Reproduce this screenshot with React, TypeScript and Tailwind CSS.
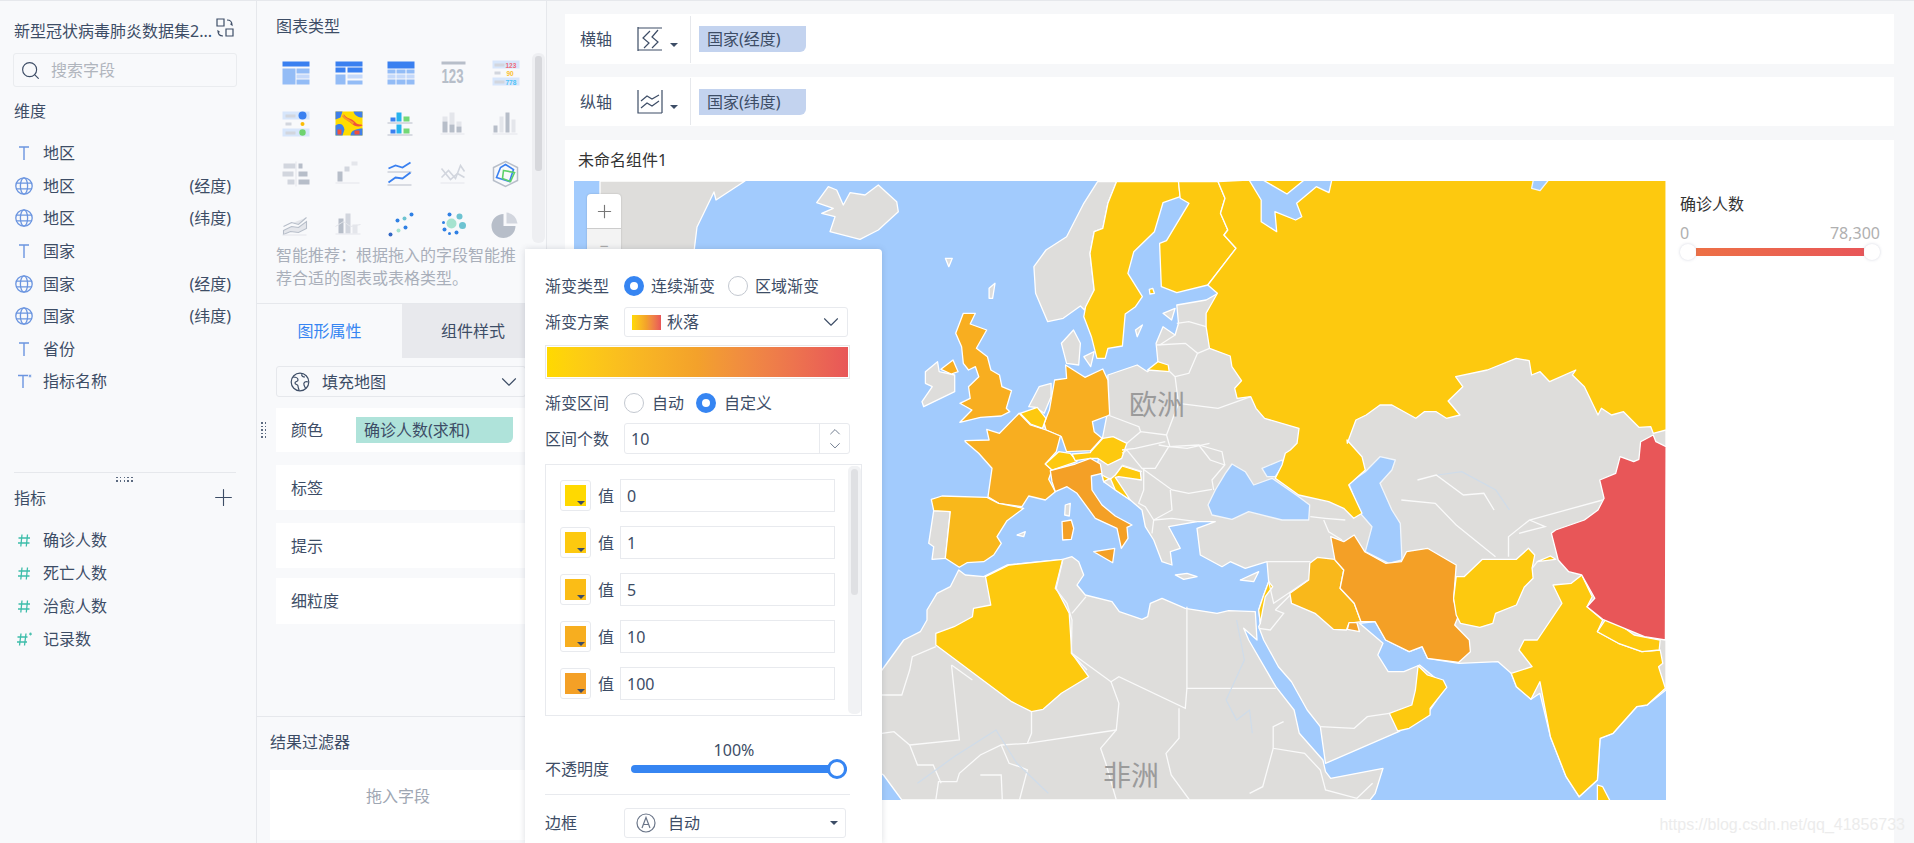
import { ChevronDown, ChevronUp, Plus, Search } from "lucide-react";

const conv = (s: string, ox: number, oy: number, sx: number) =>
  s
    .trim()
    .split(/\s+/)
    .map((p) => {
      const [x, y] = p.split(",").map(Number);
      return `${(ox + x * sx).toFixed(1)},${(oy + y / 3).toFixed(1)}`;
    })
    .join(" ");
// zoomed crop coords -> page coords
const z8 = (s: string) => conv(s, 860, 170, 1 / 2.904);
const z9 = (s: string) => conv(s, 860, 500, 1 / 1.912);
const z10 = (s: string) => conv(s, 1380, 170, 1 / 2.936);
const z11 = (s: string) => conv(s, 882, 440, 1 / 3);

const BLUE = "#a2cbfd";
const GRAY = "#dedddb";
const YEL = "#fdc90f";
const ORG = "#f8ae20";
const ORG2 = "#f4a026";
const SPN = "#f9b81b";
const RED = "#e85658";

const lands: [string, string][] = [
  // gray land
  [GRAY, "600,181 745,181 716,200 714,192 697,227 693,260 620,260 600,200"],
  [GRAY, conv("800,608 835,560 860,570 880,615 900,578 945,585 985,555 1040,605 1045,635 985,690 930,718 840,695 855,650 815,640 850,625", 550, 0, 1 / 3)],
  [
    GRAY,
    z8("720,615 805,585 835,605 865,575 860,520 880,470 915,495 925,460 920,405 1005,390 1040,370 1200,300") +
      " 1666,300 1666,690 " +
      z9("1505,615 1485,620 1440,700 1415,715 1410,840 1375,890 1350,830 1320,710 1300,580 1283,598 1255,560 1245,520 1220,485 1145,490 1085,475 1075,440 1050,455 1005,420 985,365 955,370 1000,430 990,465 1010,515 1040,515 1070,495 1120,560 1090,630 1030,695 890,790 880,680 855,630 825,545 800,500") +
      " " +
      z11("1145,600 1130,560 1135,550 1130,510 1145,465 1160,425 1155,365 1090,385 1045,365 1020,380 955,345 945,265 1000,245 945,245 860,260 895,325 865,335 870,375 840,365 815,300 790,260 780,210 745,180 700,150 665,125 660,105") +
      " " +
      z8("690,880 720,720"),
  ],
  [
    GRAY,
    z11("230,390 250,405 305,410 375,375 542,358 570,350 590,365 605,405 585,435 610,465 690,485 712,515 780,538 797,530 805,490 840,475 910,505 1005,520 1040,512 1120,515 1125,600 1085,565 1100,600") +
      " " +
      z9("795,560 830,630 840,700 885,780 890,815 900,835 1000,805 985,880 975,900 80,900 45,825 0,780 0,520") +
      " " +
      z11("0,690 65,600 115,575 135,540 135,510 165,460 205,440"),
  ],
  [GRAY, z8("690,35 745,35 720,100 705,175 680,185 668,250 680,360 652,420 640,408 590,445 545,455 510,370 505,290 540,240 600,200 650,100")],
  [GRAY, z8("190,605 225,575 230,605 275,615 275,665 185,710 180,695 210,650 190,640")],
  [GRAY, z8("585,520 620,480 640,520 635,585 600,580")],
  [GRAY, z8("650,560 680,545 670,590")],
  [GRAY, z8("490,710 520,650 555,640 555,680 535,730 510,712")],
  [GRAY, z8("527,770 545,765 545,782 530,782")],
  [GRAY, z11("155,212 205,215 190,355 150,358 155,320 140,310")],
  [GRAY, z8("248,265 268,265 258,290")],
  [GRAY, z8("375,355 392,340 385,385 375,385")],
  [GRAY, z8("800,480 820,465 805,500")],
  [GRAY, z8("880,430 915,415 905,450")],
  [GRAY, z11("880,405 915,400 945,410 905,418")],
  [GRAY, z11("1075,420 1130,395 1115,425")],
  [GRAY, z11("550,195 565,190 562,228 548,225")],
  [GRAY, z11("405,285 430,275 425,290")],
  // seas on land
  [BLUE, z11("1050,72 1090,95 1115,135 1170,115 1250,170 1283,195 1280,240 1200,240 1100,215 1050,238 990,225 978,195 1000,150 1030,100")],
  [BLUE, z11("1140,85 1200,60 1205,72 1180,110 1155,110")],
  [BLUE, z10("0,860 45,870 35,900 0,940 35,1020") + " " + z11("1555,250 1560,360 1520,370 1450,335 1470,260 1435,220 1400,130 1450,95")],
  // coloured countries
  [YEL, z8("745,35 925,35 930,80 880,98 855,185 795,245 778,310 820,380 800,410 770,432 762,528 720,535 712,565 688,565 672,500 650,440 655,410 680,360 668,250 680,185 705,175 720,100")],
  [YEL, z8("925,35 1040,35 1060,85 1047,130 1068,180 1057,195 1092,235 1010,345 920,368 875,350 870,220 890,212 955,100 930,85")],
  [
    YEL,
    z8("1040,35 1060,85 1047,130 1068,180 1057,195 1092,235 1010,345 1038,370 1005,430 1005,470 1015,535 1075,558 1080,590 1108,632 1088,655 1095,685 1135,680 1150,715 1175,745 1275,775") +
      " " +
      z11("1245,10 1225,30 1210,40 1200,75 1180,115 1250,165 1340,185 1385,205 1415,235 1440,220 1400,135 1450,90 1440,50 1395,0") +
      " " +
      z8("1415,820 1440,750 1470,735 1510,705") +
      " " +
      z10("35,705 105,745 130,725 165,725 195,745 235,735 200,693 243,650 222,620 315,600 400,565 438,572 445,615 470,605 498,635 575,600 565,615 600,650 640,735 650,715 680,735 715,725 760,772 795,770 802,790 840,780 840,30") +
      " " +
      z8("1370,30 1362,68 1325,50 1268,100 1283,140 1265,150 1205,125 1210,185 1165,155 1165,90 1130,30"),
  ],
  [YEL, z8("1170,30 1290,30 1240,72")],
  [BLUE, z10("450,30 495,30 470,62 445,55")],
  [ORG, z8("235,598 270,570 285,605 265,612")],
  [ORG, z8("300,430 335,430 320,462 368,480 338,535 370,560 380,600 405,615 412,650 440,662 425,715 435,725 410,738 350,742 290,757 325,720 290,700 320,685 315,650 345,620 335,590 315,600 300,580 295,530 278,490")],
  [ORG, z8("597,585 653,622 705,597 720,630 725,735 675,755 680,785 703,805 670,842 600,845 585,800 540,780 535,760 550,720 565,630 600,625")],
  [ORG, z8("462,730 495,765 540,780 582,798 570,845") + " " + z11("490,72 510,90 500,118 520,155 490,180 440,168 420,200 350,190 318,170 330,85 290,40 250,5") + " " + z8("305,812 375,810 368,778 405,790")],
  [YEL, z8("465,730 515,712 540,745 530,775 495,762")],
  [YEL, z11("490,72 530,35 565,40 585,65 510,90")],
  [YEL, z8("670,845 705,805 735,800 775,820 760,865 720,885 690,865") + " " + z11("625,55 580,62 570,42 625,38")],
  [YEL, z8("835,600 865,575 895,585 898,605")],
  [YEL, z8("840,358 850,355 855,370 842,372")],
  [YEL, z11("660,105 685,118 700,105 720,78 775,95 778,120 710,110 700,112 745,180 700,150 685,115 665,125")],
  [ORG2, z11("505,92 580,72 625,55 655,72 660,100 628,108 630,150 660,195 700,228 750,255 735,262 738,295 718,325 705,265 640,235 585,160 555,140 520,155 510,125")],
  [ORG2, z11("540,245 568,240 575,265 568,298 542,300")],
  [ORG2, z11("635,335 698,325 692,368")],
  [SPN, z11("148,178 180,168 315,172 350,190 425,205 375,242 345,290 358,310 335,345 305,365 255,368 232,382 190,355 205,215 155,212")],
  [YEL, z9("240,230 285,195 388,178 375,265 400,340 405,460 437,530 385,580 350,628 328,635 290,605 145,435 145,400 180,380 215,350 217,325 250,315")],
  [SPN, z9("875,172 908,178 925,210 918,265 945,310 958,365 935,370 930,390 905,388 870,340 825,310 822,280 858,240 860,190")],
  [ORG2, z9("935,368 950,368 955,395 932,388")],
  [ORG2, z9("900,110 925,125 945,105 965,155 1005,190 1035,185 1045,155 1085,145 1140,195 1135,300 1145,345 1137,375 1165,420 1167,455 1145,487 1085,475 1075,440 1050,455 1005,420 985,365 958,365 945,310 918,265 925,210 908,180")],
  [YEL, z9("1190,178 1255,178 1278,145 1290,165 1285,205 1287,235 1270,262 1255,315 1215,340 1210,370 1185,382 1148,370 1140,345 1135,295 1140,230 1155,230")],
  [YEL, z9("1295,185 1320,168 1330,178")],
  [YEL, z9("1067,497 1085,525 1115,540 1122,562 1090,625 1090,645 1050,685 1028,693 1012,640 1055,615 1062,570")],
  [YEL, z9("1380,225 1400,290 1390,320 1420,360 1410,395 1450,430 1495,455 1530,450 1535,490 1527,500 1540,565 1505,615 1485,620 1440,700 1415,715 1410,840 1375,890 1350,830 1320,710 1300,545 1283,598 1255,560 1245,520 1285,500 1260,450 1270,420 1295,420 1342,310 1325,255 1360,250")],
  [YEL, z9("1425,360 1445,365 1480,405 1530,420 1528,450 1495,455 1450,430 1410,395")],
  [YEL, z9("1410,855 1420,860 1435,905 1410,905")],
  [YEL, z11("1160,425 1172,440 1150,470 1142,510 1135,550 1130,510 1145,465")],
  [RED, z10("840,830 810,815 802,795 765,815 760,868 745,875 705,860 692,910 645,930 658,985 640,1020") + " " + z9("1385,60 1330,90 1322,100 1335,180 1355,215 1380,225 1405,295 1390,320 1420,358 1500,410 1540,420")],
];

const borders: string[] = [
  z9("625,320 625,565 795,565"),
  z9("625,565 622,625 495,530 480,545 405,460"),
  z9("480,545 495,610 490,690 460,745 470,790 490,900"),
  z9("610,625 610,715 585,760 595,825 630,900"),
  z9("328,635 328,700 320,730 270,735 230,765 190,820 185,845 150,845 145,900"),
  z9("175,495 190,720 95,735 65,695 42,700"),
  z9("175,495 215,540"),
  z9("42,585 80,585 95,510 100,470 145,440"),
  z9("320,730 490,690"),
  z9("95,735 110,795 140,795 155,850"),
  z9("270,735 285,790 305,800 320,810 305,900"),
  z9("230,825 270,825 272,900"),
  z9("810,665 790,680 790,745 850,760 880,810 890,870 950,895 980,850"),
  z9("790,745 770,860 745,880"),
  z9("880,680 945,685 970,650 1012,640"),
  z9("1035,0 1100,10 1140,75 1215,170"),
  z9("1240,170 1240,110 1280,60 1420,0"),
  z9("1280,60 1310,80 1260,100"),
  z9("1295,185 1285,205"),
  z11("542,358 520,445 555,490 570,540 568,640 615,690"),
  z11("612,470 570,520"),
  z11("1160,425 1175,490 1278,420"),
  z11("1180,510 1225,465"),
  z11("1130,565 1165,570 1205,520 1180,510"),
  z11("1155,365 1285,365"),
  z11("1285,230 1330,235 1390,240"),
  z11("1325,240 1340,275 1380,300"),
  z11("780,85 870,150 920,160 990,148"),
  z11("785,90 785,150 770,190 790,200 815,240 870,210 865,150"),
  z11("815,240 870,235 945,245"),
  z11("815,240 810,280"),
  z11("830,15 860,20 820,85 780,85 735,30 720,40"),
  z11("860,20 950,15 985,60 1028,75 990,120 995,150"),
  z11("950,15 1020,35 1028,75"),
  z11("720,75 780,95"),
  z11("720,30 760,25 850,5"),
  z8("900,605 915,620 925,700 890,795 815,785 775,820"),
  z8("720,735 810,770 815,785"),
  z8("860,525 945,520 980,550 955,610 915,620"),
  z8("1015,535 980,550"),
  z8("925,700 1040,715 1135,680"),
  z8("890,795 900,830 950,835 1015,820"),
  z8("920,460 955,455 1005,470"),
  z8("870,525 915,495"),
  z10("110,930 165,915 245,975 305,970 335,1020"),
];

function WorldMap() {
  return (
    <svg viewBox="574 181 1092 619" className="h-[619px] w-[1092px] shrink-0" fill="none">
      <rect x="574" y="181" width="1092" height="619" fill={BLUE} />
      {lands.map(([fill, pts], i) => (
        <polygon key={i} points={pts} fill={fill} stroke={fill === BLUE ? "#f1f6fc" : "#fff"} strokeWidth="1.3" strokeLinejoin="round" />
      ))}
      {borders.map((pts, i) => (
        <polyline key={i} points={pts} stroke="#fafafa" strokeWidth="1.3" />
      ))}
      <polyline points={z9("720,360 735,480 700,600 720,660 745,630 750,700")} stroke="#cfdcea" strokeWidth="1.2" />
      <polyline points={z9("110,850 180,770 260,690 300,790 360,880")} stroke="#cfdcea" strokeWidth="1.2" />
      <polyline points={z10("170,915 240,905 340,960 380,1020")} stroke="#cfdcea" strokeWidth="1.2" />
      <text x="1129" y="415" fontSize="28" fill="#9b9b9b">欧洲</text>
      <text x="1103" y="786" fontSize="28" fill="#9b9b9b">非洲</text>
    </svg>
  );
}

const TIcon = ({ star }: { star?: boolean }) => (
  <svg width="18" height="18" viewBox="0 0 18 18" fill="none" stroke="#6b95e0" strokeWidth="1.4" className="shrink-0">
    <path d={star ? "M3 3.5h10M8 3.5V16" : "M4 3h10M9 3v13"} />
    {star && <path d="M15 2.5v3M13.7 3.2l2.6 1.5M16.3 3.2l-2.6 1.5" strokeWidth="0.8" />}
  </svg>
);

const GlobeIcon = () => (
  <svg width="18" height="18" viewBox="0 0 18 18" fill="none" stroke="#6b95e0" strokeWidth="1.3" className="shrink-0">
    <circle cx="9" cy="9" r="8.2" />
    <ellipse cx="9" cy="9" rx="3.6" ry="8.2" />
    <path d="M1 6.2h16M1 11.8h16" />
  </svg>
);

const HashIcon = ({ star }: { star?: boolean }) => (
  <svg width="18" height="18" viewBox="0 0 18 18" fill="none" stroke="#3dbdaa" strokeWidth="1.3" className="shrink-0">
    {star ? (
      <>
        <path d="M6 3.5 4.5 15.5M11 3.5 9.5 15.5M2.5 7h10M2 12h10" />
        <path d="M15.5 2.5v3M14.2 3.2l2.6 1.5M16.8 3.2l-2.6 1.5" strokeWidth="0.8" />
      </>
    ) : (
      <path d="M7 3.5 5.8 15.5M12.5 3.5 11.3 15.5M3.5 7h11.5M3 12h11.5" />
    )}
  </svg>
);

function FieldRow({ icon, name, suffix, tall }: { icon: React.ReactNode; name: string; suffix?: string; tall?: boolean }) {
  return (
    <div className={`flex items-center pl-[15px] pr-[25px] ${tall ? "h-[33px]" : "h-[32.6px]"}`}>
      <span className="flex w-[28px] shrink-0">{icon}</span>
      <span className="text-[16px] text-[#3d4d66]">{name}</span>
      {suffix && <span className="ml-auto text-[16px] text-[#3d4d66]">{suffix}</span>}
    </div>
  );
}

const Caret = ({ className = "" }: { className?: string }) => (
  <span className={`block h-0 w-0 border-x-[4px] border-t-[4px] border-x-transparent border-t-[#3d4d66] ${className}`} />
);

const Radio = ({ on }: { on?: boolean }) => (
  <span className={`block size-[20px] shrink-0 rounded-full ${on ? "border-[6px] border-[#3685f2] bg-white" : "border border-[#c3c8d0] bg-white"}`} />
);

const B1 = "#3a80f0";
const B2 = "#93bcf6";
const B3 = "#c5d9fa";
const G1 = "#b7bec9";
const G2 = "#d2d6de";
const G3 = "#e4e6eb";

const R = (x: number, y: number, w: number, h: number, fill: string) => <rect x={x} y={y} width={w} height={h} fill={fill} />;

const chartIcons: React.ReactNode[] = [
  <>{R(0, 1, 27, 5, B1)}{R(0, 8, 13, 16, B2)}{R(14, 8, 13, 5, B2)}{R(14, 14, 13, 4, B3)}{R(14, 19, 13, 5, B2)}</>,
  <>{R(0, 1, 27, 5, B1)}{R(0, 7, 10, 5, B1)}{R(12, 7, 15, 5, B1)}{R(0, 14, 10, 10, B2)}{R(12, 14, 15, 4, B3)}{R(12, 20, 15, 4, B2)}</>,
  <>{R(0, 1, 27, 7, B1)}{R(0, 9, 8, 4, B2)}{R(9, 9, 9, 4, B2)}{R(19, 9, 8, 4, B2)}{R(0, 14, 8, 4, B3)}{R(9, 14, 9, 4, B3)}{R(19, 14, 8, 4, B3)}{R(0, 19, 8, 5, B2)}{R(9, 19, 9, 5, B2)}{R(19, 19, 8, 5, B2)}</>,
  <>{R(1, 1, 24, 3, G1)}<text x="1" y="22" fontSize="21" fontWeight="700" fill={G1} textLength="22" lengthAdjust="spacingAndGlyphs" fontFamily="Liberation Sans Narrow, Liberation Sans">123</text></>,
  <>{R(0, 0, 27, 8, "#d7e6fb")}{R(0, 17, 27, 8, "#d7e6fb")}{R(2, 3, 10, 3, G2)}{R(2, 11, 6, 3, G2)}{R(2, 20, 10, 3, G2)}<text x="13" y="7" fontSize="6.5" fontWeight="700" fill="#ee6b78" fontFamily="Liberation Sans">123</text><text x="14" y="15" fontSize="6.5" fontWeight="700" fill="#fbc02d" fontFamily="Liberation Sans">90</text><text x="13" y="24" fontSize="6.5" fontWeight="700" fill="#4fc3f7" fontFamily="Liberation Sans">778</text></>,
  <>{R(0, 0, 27, 8, "#d7e6fb")}{R(0, 17, 27, 8, "#d7e6fb")}{R(3, 3, 10, 3, G2)}{R(3, 11, 6, 3, G2)}{R(3, 20, 10, 3, G2)}<circle cx="20" cy="4" r="4" fill={B1} /><circle cx="20" cy="12.5" r="2" fill="#fbbc05" /><circle cx="20" cy="21" r="3.2" fill="#6fd36f" /></>,
  <>{R(0, 0, 27, 24, "#ffdd00")}<path d="M0 0h7l-2 6-5 2zM0 14c5-3 8-1 9 4l-2 6H0zM15 24c0-5 6-7 12-7v7zM18 0h9v6c-4 0-8-2-9-6z" fill="#3f7fe8" /><path d="M8 2c3 6 8 4 12 9 3 3 6 1 7 3-4 2-8 1-11-2-3-3-7-3-8-10zM2 18h4v5H2zM19 19h5v4h-5z" fill="#f1523b" /><path d="M7 4c3 5 7 4 11 8" stroke="#f79a2a" strokeWidth="2" fill="none" /></>,
  <>{R(3, 6, 5, 4, B1)}{R(9, 1, 5, 9, "#27b3ee")}{R(16, 5, 6, 5, "#73d877")}{R(0, 11, 25, 1, G1)}{R(3, 18, 5, 4, B1)}{R(9, 13, 5, 9, "#27b3ee")}{R(16, 17, 6, 5, "#73d877")}{R(0, 23, 25, 1, G1)}</>,
  <>{R(2, 5, 5, 5, G3)}{R(2, 10, 5, 11, G1)}{R(9, 1, 5, 12, G3)}{R(9, 13, 5, 8, G1)}{R(16, 10, 5, 5, G3)}{R(16, 15, 5, 6, G1)}{R(0, 22, 24, 1, G3)}</>,
  <>{R(1, 14, 4, 7, G1)}{R(7, 5, 4, 16, G3)}{R(13, 1, 4, 20, G1)}{R(19, 8, 4, 13, G3)}{R(0, 22, 25, 1, G3)}</>,
  <>{R(1, 2, 12, 5, G2)}{R(16, 2, 4, 5, G1)}{R(0, 10, 11, 5, G2)}{R(16, 10, 9, 5, G1)}{R(5, 18, 7, 5, G2)}{R(16, 18, 11, 5, G1)}{R(13, 0, 1, 25, G3)}</>,
  <>{R(2, 10, 5, 10, G1)}{R(9, 5, 5, 5, G2)}{R(16, 0, 6, 4, G3)}{R(0, 21, 24, 1, G3)}</>,
  <><path d="M1 7l7-3 7 2 8-5" stroke={B1} strokeWidth="1.8" fill="none" />{R(0, 10, 24, 1, G1)}<path d="M1 21l7-5 7 1 8-6" stroke={B1} strokeWidth="1.8" fill="none" />{R(0, 23, 24, 1, G1)}</>,
  <><path d="M1 16 8 9l7 8 5-13 4 6" stroke={G2} strokeWidth="1.6" fill="none" /><path d="M1 7l9 11 7-6 7 4" stroke={G2} strokeWidth="1.6" fill="none" />{R(0, 21, 24, 1, G3)}</>,
  <><path d="M13 0 25 6v13l-12 6L1 19V6z" stroke={G1} strokeWidth="1.5" fill="none" /><path d="M13 3 21 8l-4 12-13-4 4-10z" stroke={B1} strokeWidth="1.6" fill="none" /><path d="M11 9l11 2-4 9-8-3z" stroke="#5ed16a" strokeWidth="1.6" fill="none" /></>,
  <><path d="M1 14l8-4 7 2 8-7M1 18l8-4 7 1 8-6v7l-8 4-8-1-7 3z" stroke={G1} strokeWidth="1.1" fill={G3} />{R(0, 22, 24, 1, G3)}</>,
  <>{R(3, 6, 5, 15, G1)}{R(10, 1, 5, 20, G2)}{R(17, 12, 5, 9, G3)}<path d="M0 14l8-5 7 5 10-2" stroke={G3} strokeWidth="1" fill="none" />{R(0, 21, 25, 1, G3)}</>,
  <><circle cx="3" cy="22" r="2" fill="#3367c4" /><circle cx="10" cy="8" r="2" fill="#2f80e4" /><circle cx="11" cy="18" r="2" fill="#a6e3cf" /><circle cx="17" cy="6" r="2" fill="#6dc3d1" /><circle cx="18" cy="15" r="2" fill="#2f80e4" /><circle cx="24" cy="2" r="2" fill="#2f80e4" /></>,
  <><circle cx="11" cy="11" r="5" fill="#a6e3cf" /><circle cx="19" cy="4" r="3" fill="#6dc3d1" /><circle cx="22" cy="13" r="3.5" fill="#6dc3d1" /><circle cx="9" cy="2" r="2" fill="#2f80e4" /><circle cx="3" cy="10" r="1.5" fill="#2f80e4" /><circle cx="4" cy="17" r="2" fill="#2f80e4" /><circle cx="9" cy="21" r="1.5" fill="#2f80e4" /><circle cx="16" cy="20" r="2" fill="#2f80e4" /></>,
  <><path d="M11 1.5A12 12 0 1 0 23 13.5H11z" fill={G1} /><path d="M14 0a12 12 0 0 1 11 11H14z" fill={G2} /></>,
];

const FIELD_TEXT = "text-[16px] text-[#3d4d66]";

const stops = [
  { color: "bg-[#ffd900]", value: "0" },
  { color: "bg-[#fdc90f]", value: "1" },
  { color: "bg-[#fbbd16]", value: "5" },
  { color: "bg-[#f7ae1f]", value: "10" },
  { color: "bg-[#f4a026]", value: "100" },
];

function GradientPopup() {
  return (
    <div className="absolute left-[525px] top-[248px] h-[595px] w-[357px] overflow-hidden rounded-tr-sm bg-white pl-[20px] shadow-[0_0_6px_rgba(60,70,90,0.18)]">
      <div className="mt-[25px] flex h-[24px] items-center">
        <span className={`w-[79px] ${FIELD_TEXT}`}>渐变类型</span>
        <Radio on />
        <span className={`ml-[7px] ${FIELD_TEXT}`}>连续渐变</span>
        <span className="ml-[13px]"><Radio /></span>
        <span className={`ml-[7px] ${FIELD_TEXT}`}>区域渐变</span>
      </div>
      <div className="mt-[9px] flex items-center">
        <span className={`w-[79px] ${FIELD_TEXT}`}>渐变方案</span>
        <div className="flex h-[30px] w-[224px] items-center rounded-[3px] border border-[#e8eaee] pl-[7px] pr-[3px]">
          <span className="h-[15px] w-[29px] bg-gradient-to-r from-[#ffd900] via-[#f3a12b] to-[#e85658]" />
          <span className={`ml-[6px] ${FIELD_TEXT}`}>秋落</span>
          <ChevronDown className="ml-auto size-[26px] text-[#3d4d66]" strokeWidth={1} />
        </div>
      </div>
      <div className="mt-[8px] h-[34px] w-[305px] border border-[#e8e8e8] p-px">
        <div className="h-full bg-gradient-to-r from-[#ffd900] via-[#f3a12b] to-[#e85658]" />
      </div>
      <div className="mt-[12px] flex h-[24px] items-center">
        <span className={`w-[79px] ${FIELD_TEXT}`}>渐变区间</span>
        <Radio />
        <span className={`ml-[8px] ${FIELD_TEXT}`}>自动</span>
        <span className="ml-[12px]"><Radio on /></span>
        <span className={`ml-[8px] ${FIELD_TEXT}`}>自定义</span>
      </div>
      <div className="mt-[8px] flex items-center">
        <span className={`w-[79px] ${FIELD_TEXT}`}>区间个数</span>
        <div className="flex h-[31px] w-[226px] items-center rounded-[3px] border border-[#e8eaee] pl-[6px]">
          <span className={FIELD_TEXT}>10</span>
          <div className="ml-auto flex h-full w-[30px] flex-col items-center justify-center border-l border-[#e8eaee]">
            <ChevronUp className="-my-[1.5px] size-[20px] text-[#3d4d66]" strokeWidth={1} />
            <ChevronDown className="-my-[1.5px] size-[20px] text-[#3d4d66]" strokeWidth={1} />
          </div>
        </div>
      </div>
      <div className="mt-[10px] flex h-[252px] w-[317px] overflow-hidden border border-[#e8eaee] pl-[14px]">
        <div className="flex w-[275px] flex-col gap-[14px] pt-[14px]">
          {stops.map((s) => (
            <div key={s.value} className="flex h-[33px] shrink-0 items-center">
              <div className="relative flex size-[31px] items-center justify-center rounded-[3px] border border-[#e8eaee]">
                <span className={`size-[21px] ${s.color}`} />
                <Caret className="absolute bottom-[5px] right-[5px]" />
              </div>
              <span className={`ml-[7px] w-[22px] ${FIELD_TEXT}`}>值</span>
              <div className={`flex h-[33px] flex-1 items-center border border-[#e8eaee] pl-[6px] ${FIELD_TEXT}`}>{s.value}</div>
            </div>
          ))}
        </div>
        <div className="my-px ml-auto w-[13px] rounded-[5px] bg-[#f1f2f4] px-[3px] pt-[3px]">
          <div className="h-[126px] rounded-[4px] bg-[#dfe0e3]" />
        </div>
      </div>
      <div className={`ml-[166px] mt-[25px] w-[46px] text-center leading-[18px] ${FIELD_TEXT}`}>100%</div>
      <div className="-mt-[2px] flex h-[24px] items-center">
        <span className={`w-[86px] ${FIELD_TEXT}`}>不透明度</span>
        <div className="relative h-[8px] w-[216px] rounded-full bg-[#3685f2]">
          <span className="absolute right-0 top-[-6px] size-[20px] rounded-full border-[3px] border-[#3685f2] bg-white" />
        </div>
      </div>
      <div className="mt-[13px] h-px w-[305px] bg-[#e8eaee]" />
      <div className="mt-[13px] flex items-center">
        <span className={`w-[79px] ${FIELD_TEXT}`}>边框</span>
        <div className="flex h-[30px] w-[222px] items-center rounded-[3px] border border-[#e8eaee] pl-[11px] pr-[7px]">
          <svg width="20" height="20" viewBox="0 0 20 20" fill="none" stroke="#6b7689" strokeWidth="1.2">
            <circle cx="10" cy="10" r="9" />
            <path d="M6 15 10 4.5 14 15M7.2 11.5h5.6" />
          </svg>
          <span className={`ml-[12px] ${FIELD_TEXT}`}>自动</span>
          <Caret className="ml-auto" />
        </div>
      </div>
    </div>
  );
}

function AxisBar({ label, pill, icon, className }: { label: string; pill: string; icon: React.ReactNode; className: string }) {
  return (
    <div className={`flex items-center bg-white ${className}`}>
      <span className="ml-[15px] w-[57px] text-[16px] text-[#3d4d66]">{label}</span>
      {icon}
      <Caret className="ml-[7px] mt-[11px]" />
      <span className="ml-[12px] h-[47px] w-px bg-[#e6e8ec]" />
      <span className="ml-[8px] flex h-[26px] w-[107px] items-center rounded-br-[6px] bg-[#c3d3ef] pl-[8px] text-[16px] text-[#3d4d66]">{pill}</span>
    </div>
  );
}

function Row({ label, className }: { label: string; className: string }) {
  return (
    <div className={`ml-[19px] flex items-center bg-white pl-[15px] ${className}`}>
      <span className="text-[16px] text-[#3d4d66]">{label}</span>
    </div>
  );
}

export default function App() {
  return (
    <div className="relative flex h-[843px] w-[1914px] overflow-hidden border-t border-[#e6e8ec] bg-[#f6f7f9] font-['Noto_Sans','Noto_Sans_CJK_SC',sans-serif]">
      {/* fields */}
      <aside className="flex w-[257px] shrink-0 flex-col border-r border-[#e6e8ec] bg-[#f8f9fb]">
        <div className="flex items-center pl-[14px] pt-[18px]">
          <span className="w-[198px] whitespace-nowrap text-[16px] leading-[24px] text-[#3d4d66]">新型冠状病毒肺炎数据集2...</span>
          <svg width="20" height="20" viewBox="0 0 20 20" fill="none" stroke="#3d4d66" strokeWidth="1.2" className="ml-[3px] -mt-[6px]">
            <path d="M2 1h7v7H2zM11 11h7v7h-7z" />
            <path d="M12 2c3 0 5 2 5 5l-1.5-1.2M8 18c-3 0-5-2-5-5l1.5 1.2" />
          </svg>
        </div>
        <div className="ml-[13px] mt-[10px] flex h-[34px] w-[224px] items-center rounded-[3px] border border-[#eaecef] pl-[6px]">
          <Search className="size-[21px] text-[#3d4d66]" strokeWidth={1.3} />
          <span className="ml-[10px] text-[16px] text-[#b0b5bd]">搜索字段</span>
        </div>
        <div className="ml-[14px] mt-[12px] text-[16px] leading-[24px] text-[#3d4d66]">维度</div>
        <div className="mt-[14px] flex flex-col">
          <FieldRow icon={<TIcon />} name="地区" />
          <FieldRow icon={<GlobeIcon />} name="地区" suffix="(经度)" />
          <FieldRow icon={<GlobeIcon />} name="地区" suffix="(纬度)" />
          <FieldRow icon={<TIcon />} name="国家" />
          <FieldRow icon={<GlobeIcon />} name="国家" suffix="(经度)" />
          <FieldRow icon={<GlobeIcon />} name="国家" suffix="(纬度)" />
          <FieldRow icon={<TIcon />} name="省份" />
          <FieldRow icon={<TIcon star />} name="指标名称" />
        </div>
        <div className="ml-[14px] mt-[74px] h-px w-[222px] bg-[#e6e8ec]" />
        <div className="ml-[116px] mt-[4px] grid w-[17px] grid-cols-5 gap-[2px]">
          {Array.from({ length: 10 }).map((_, i) => (
            <span key={i} className="size-[1.5px] bg-[#5b6a80]" />
          ))}
        </div>
        <div className="mt-[4px] flex items-center justify-between pl-[14px] pr-[19px]">
          <span className="text-[16px] leading-[24px] text-[#3d4d66]">指标</span>
          <Plus className="-my-[2px] size-[27px] text-[#3d4d66]" strokeWidth={1} />
        </div>
        <div className="mt-[14px] flex flex-col">
          <FieldRow tall icon={<HashIcon />} name="确诊人数" />
          <FieldRow tall icon={<HashIcon />} name="死亡人数" />
          <FieldRow tall icon={<HashIcon />} name="治愈人数" />
          <FieldRow tall icon={<HashIcon star />} name="记录数" />
        </div>
      </aside>

      {/* chart config */}
      <section className="relative flex w-[290px] shrink-0 flex-col border-r border-[#e6e8ec] bg-[#f8f9fb]">
        <div className="ml-[19px] mt-[13px] text-[16px] leading-[24px] text-[#3d4d66]">图表类型</div>
        <div className="relative mt-[10px] h-[200px]">
          <div className="ml-[13px] grid grid-cols-[repeat(5,52.5px)] grid-rows-[repeat(4,50.5px)]">
            {chartIcons.map((icon, i) => (
              <div key={i} className="flex items-center justify-center">
                <svg width="28" height="26" viewBox="-0.5 -0.5 28 26" className="overflow-visible">{icon}</svg>
              </div>
            ))}
          </div>
          <div className="absolute right-[1px] top-[5px] h-[190px] w-[13px] rounded-[6px] bg-[#eeeff2] px-[3px] pt-[3px]">
            <div className="h-[115px] rounded-[3px] bg-[#d7d8dc]" />
          </div>
        </div>
        <p className="-mt-[4px] ml-[19px] w-[240px] text-[16px] leading-[23px] text-[#a9afba]">智能推荐：根据拖入的字段智能推荐合适的图表或表格类型。</p>
        <div className="mt-[13px] flex h-[55px] border-t border-[#e6e8ec]">
          <div className="flex w-[145px] items-center justify-center text-[16px] text-[#3685f2]">图形属性</div>
          <div className="flex flex-1 items-center justify-center bg-[#e8e9ed] pr-[2px] text-[16px] text-[#3d4d66]">组件样式</div>
        </div>
        <div className="ml-[19px] mt-[8px] flex h-[31px] w-[250px] items-center rounded-[3px] border border-[#e6e8ec] pl-[13px]">
          <svg width="20" height="20" viewBox="0 0 20 20" fill="none" stroke="#3d4d66" strokeWidth="1.2">
            <circle cx="10" cy="10" r="8.8" />
            <path d="M3 5c3 0 5 1 5 3s-3 1-3 3 3 1 3 3 1 3 1 4M12 2c-1 2 1 3 3 3M18 10c-2-1-5 0-4 3s2 3 2 3" />
          </svg>
          <span className="ml-[12px] text-[16px] text-[#3d4d66]">填充地图</span>
          <ChevronDown className="ml-auto mr-[3px] size-[26px] text-[#3d4d66]" strokeWidth={1} />
        </div>
        <div className="relative ml-[19px] mt-[11px] flex h-[44px] items-center bg-white pl-[15px]">
          <span className="absolute left-[-15px] top-[14px] grid grid-cols-2 gap-[2px]">
            {Array.from({ length: 10 }).map((_, i) => (
              <span key={i} className="size-[1.5px] bg-[#5b6a80]" />
            ))}
          </span>
          <span className="text-[16px] text-[#3d4d66]">颜色</span>
          <span className="ml-[33px] flex h-[26px] w-[157px] items-center rounded-br-[6px] bg-[#afe3da] pl-[8px] text-[16px] text-[#3d4d66]">确诊人数(求和)</span>
        </div>
        <Row label="标签" className="mt-[13px] h-[45px]" />
        <Row label="提示" className="mt-[13px] h-[45px]" />
        <Row label="细粒度" className="mt-[10px] h-[46px]" />
        <div className="mt-[92px] h-px bg-[#e6e8ec]" />
        <div className="ml-[13px] mt-[13px] text-[16px] leading-[24px] text-[#3d4d66]">结果过滤器</div>
        <div className="ml-[13px] mt-[16px] flex h-[70px] items-start justify-center bg-white pr-[20px] pt-[14px] text-[16px] text-[#9ea6b2]">拖入字段</div>
      </section>

      {/* canvas */}
      <main className="flex min-w-0 flex-1 flex-col pl-[18px] pr-[20px] pt-[13px]">
        <AxisBar
          label="横轴"
          pill="国家(经度)"
          className="h-[50px]"
          icon={
            <svg width="26" height="24" viewBox="0 0 26 24" fill="none" stroke="#3d4d66" strokeWidth="1.2">
              <path d="M1 0v24M1 1h24M1 23h24M13 4 6 11l6 5-5 5M21 3l-6 7 6 5-6 6" />
            </svg>
          }
        />
        <AxisBar
          label="纵轴"
          pill="国家(纬度)"
          className="mt-[13px] h-[49px]"
          icon={
            <svg width="26" height="24" viewBox="0 0 26 24" fill="none" stroke="#3d4d66" strokeWidth="1.2">
              <path d="M1 0v23h24M25 0v23M4 11l6-5 5 3 7-4M4 18l6-5 5 3 7-5" />
            </svg>
          }
        />
        <div className="mt-[14px] flex flex-1 flex-col bg-white pl-[9px]">
          <div className="pl-[4px] pt-[9px] text-[16px] leading-[22px] text-[#333]">未命名组件1</div>
          <div className="mt-[10px] flex">
            <div className="relative">
              <WorldMap />
              <div className="absolute left-[13px] top-[13px] w-[34px] overflow-hidden rounded-[4px] bg-white shadow-[0_0_2px_rgba(0,0,0,0.2)]">
                <div className="flex h-[34px] items-center justify-center text-[#777]">
                  <Plus className="size-[21px]" strokeWidth={1.3} />
                </div>
                <div className="flex h-[34px] items-center justify-center border-t border-[#ccc] bg-[#f3f3f3] text-[#aaa]">−</div>
              </div>
            </div>
            <div className="ml-[14px] flex w-[200px] flex-col">
              <div className="mt-[12px] text-[16px] leading-[22px] text-[#333]">确诊人数</div>
              <div className="mt-[8px] flex justify-between text-[16px] leading-[20px] text-[#b0b0b0]">
                <span>0</span>
                <span>78,300</span>
              </div>
              <div className="mt-[1px] flex items-center">
                <span className="z-10 size-[16px] shrink-0 rounded-full bg-white shadow-[0_0_3px_rgba(120,130,160,0.35)]" />
                <span className="h-[8px] flex-1 bg-gradient-to-r from-[#ed7045] to-[#e85658]" />
                <span className="z-10 size-[16px] shrink-0 rounded-full bg-white shadow-[0_0_3px_rgba(120,130,160,0.35)]" />
              </div>
            </div>
          </div>
        </div>
      </main>

      <GradientPopup />
      <span className="absolute bottom-[6px] right-[9px] font-['Liberation_Sans',sans-serif] text-[16px] text-[#ececec]">https://blog.csdn.net/qq_41856733</span>
    </div>
  );
}
